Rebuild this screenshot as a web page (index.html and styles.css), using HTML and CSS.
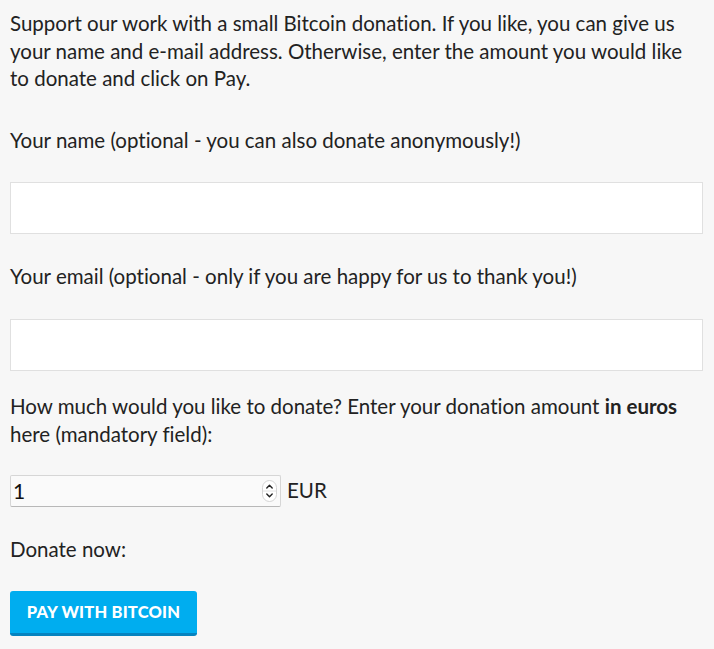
FILE: index.html
```html
<!DOCTYPE html>
<html lang="en">
<head>
  <meta charset="UTF-8" />
  <meta name="viewport" content="width=device-width, initial-scale=1.0"/>
  <title>Donate</title>
  <link rel="stylesheet" href="styles.css">
</head>
<body>
  <form class="donate-form">
    <p class="intro">Support our work with a small Bitcoin donation. If you like, you can give us your name and e-mail address. Otherwise, enter the amount you would like to donate and click on Pay.</p>

    <label for="donor-name" class="field-label">Your name (optional - you can also donate anonymously!)</label>
    <input type="text" id="donor-name" class="text-field">

    <label for="donor-email" class="field-label">Your email (optional - only if you are happy for us to thank you!)</label>
    <input type="text" id="donor-email" class="text-field">

    <label for="amount" class="field-label amount-label">How much would you like to donate? Enter your donation amount <strong>in euros</strong> here (mandatory field):</label>
    <div class="amount-row">
      <div class="number-box">
        <input type="text" id="amount" class="number-field" value="1">
        <svg class="spinner" width="15" height="22" viewBox="0 0 15 22">
          <rect x="0.5" y="0.5" width="14" height="21" rx="7" fill="#fff" stroke="#d4d4d4"/>
          <line x1="1" y1="11" x2="14" y2="11" stroke="#e2e2e2"/>
          <path d="M4.8 8 L7.5 5.3 L10.2 8" fill="none" stroke="#222" stroke-width="1.4" stroke-linecap="round" stroke-linejoin="round"/>
          <path d="M4.8 14 L7.5 16.7 L10.2 14" fill="none" stroke="#222" stroke-width="1.4" stroke-linecap="round" stroke-linejoin="round"/>
        </svg>
      </div>
      <span class="currency">EUR</span>
    </div>

    <p class="donate-now">Donate now:</p>
    <button type="submit" class="pay-button">Pay with Bitcoin</button>
  </form>
</body>
</html>
```

FILE: styles.css
```css
* {
  box-sizing: border-box;
}

body {
  margin: 0;
  padding: 10px 0 0 10px;
  background: #f7f7f7;
  color: #222;
  font-family: 'Lato', sans-serif;
  font-size: 20.5px;
  line-height: 27.5px;
  font-variant-ligatures: none;
}

.donate-form {
  display: flex;
  flex-direction: column;
  align-items: flex-start;
}

.intro {
  width: 690px;
  margin: 0 0 34px 0;
}

.field-label {
  display: block;
  margin-bottom: 28px;
}

.text-field {
  width: 693px;
  height: 52px;
  margin: 0 0 29px 0;
  padding: 0 12px;
  background: #fff;
  border: 1px solid #e0e0e0;
  font-family: inherit;
  font-size: 20px;
  outline: none;
}

.amount-label {
  margin-top: -8px;
  margin-bottom: 26px;
  line-height: 28.5px;
}

.amount-row {
  display: flex;
  align-items: center;
  gap: 6px;
}

.number-box {
  display: flex;
  align-items: center;
  width: 271px;
  height: 32px;
  padding: 0 3px 0 2px;
  background: #fafafa;
  border: 1px solid #d6d6d6;
  border-bottom-color: #b8b8b8;
  border-radius: 2px;
}

.number-field {
  flex: 1;
  min-width: 0;
  border: none;
  background: transparent;
  font-family: inherit;
  font-size: 21px;
  color: #111;
  outline: none;
  padding: 0;
}

.currency {
  font-size: 20.5px;
}

.donate-now {
  margin: 29px 0 28px 0;
}

.pay-button {
  width: 187px;
  height: 45px;
  padding: 0;
  background: #00adef;
  border: none;
  border-bottom: 3px solid #0583bf;
  border-radius: 3px;
  color: #fff;
  font-family: inherit;
  font-size: 16.5px;
  font-weight: 900;
  text-transform: uppercase;
  letter-spacing: 0.2px;
  cursor: pointer;
}
```
